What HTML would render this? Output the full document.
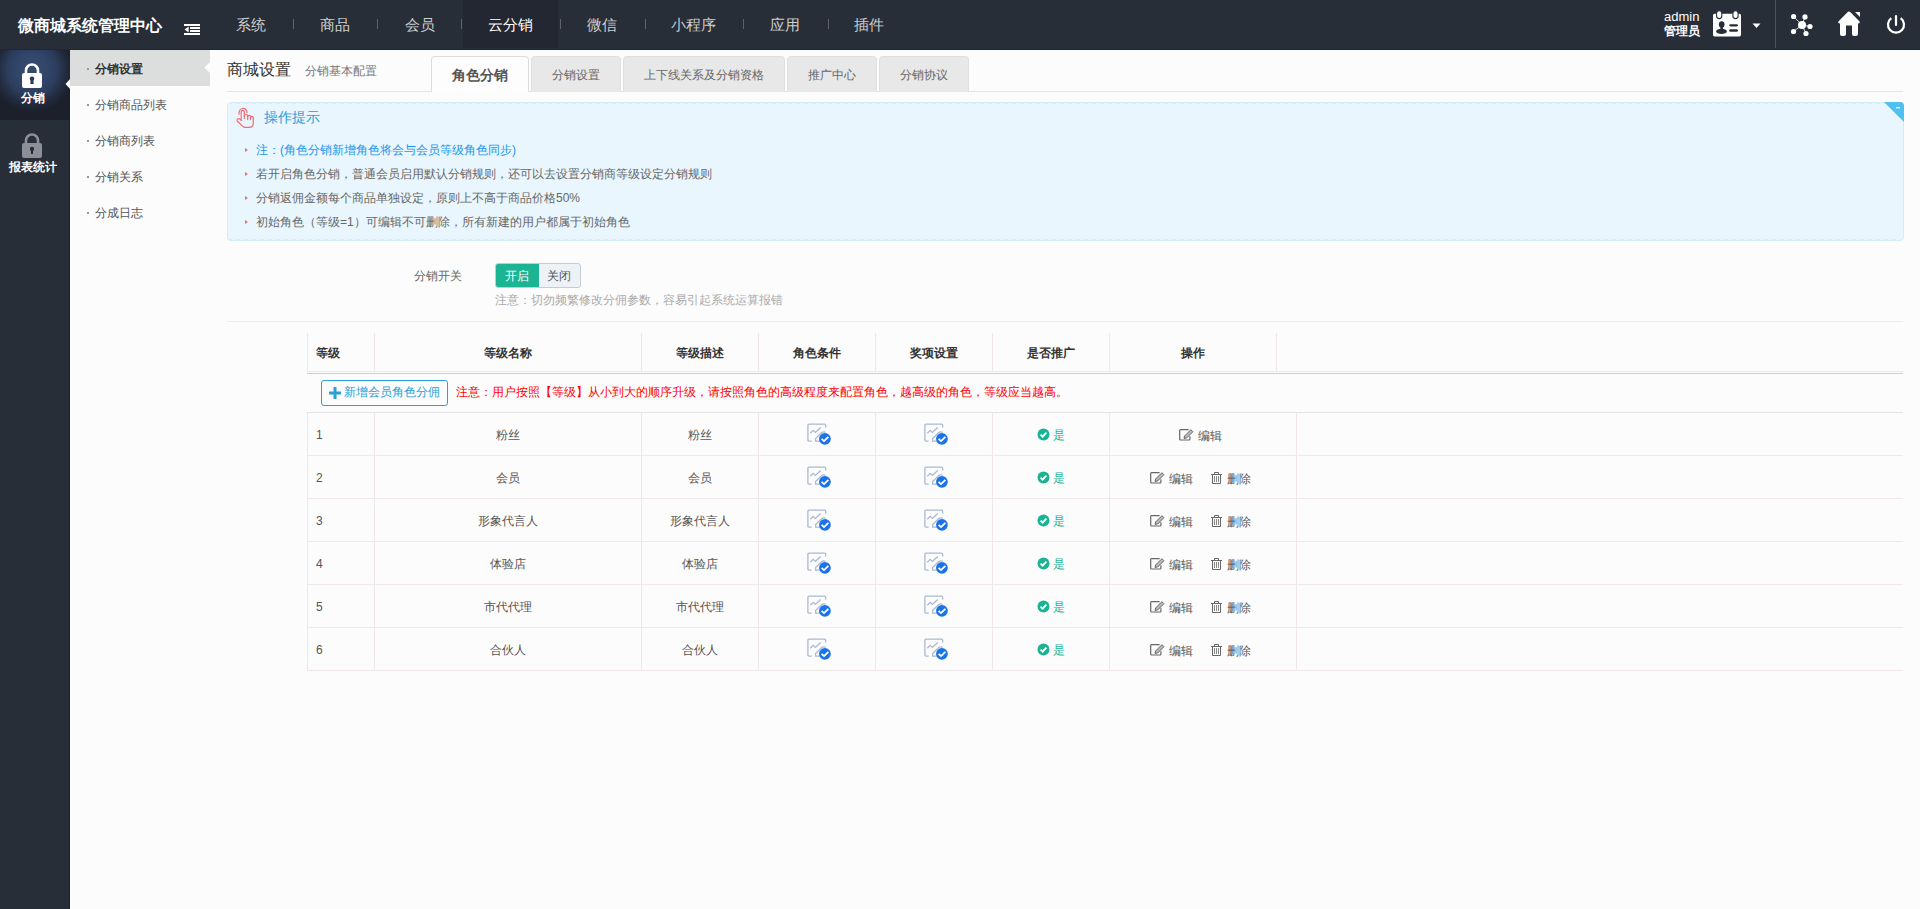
<!DOCTYPE html>
<html><head><meta charset="utf-8">
<style>
*{margin:0;padding:0;box-sizing:border-box}
html,body{width:1920px;height:909px;overflow:hidden;background:#fcfcfc;font-family:"Liberation Sans",sans-serif;font-size:12px;color:#555}
.abs{position:absolute;white-space:nowrap}
#hdr{position:absolute;left:0;top:0;width:1920px;height:50px;background:#282e38;border-bottom:1px solid #222830}
#logo{left:18px;top:16px;font-size:16px;font-weight:bold;color:#fff}
.nav{top:16px;font-size:15px;color:#cfcfcf}
.sep{top:19px;width:1px;height:10px;background:#5d626b}
#side{position:absolute;left:0;top:50px;width:70px;height:859px;background:#282e38;border-right:1px solid #1d222b}
#sub{position:absolute;left:70px;top:50px;width:140px;height:859px;background:#fcfcfc}

.sm{left:87px;font-size:12px;color:#555}
.sm i{display:inline-block;width:2px;height:2px;background:#999;margin-right:6px;vertical-align:top;position:relative;top:7px}
.tab{top:56px;height:36px;background:#e8e8e8;border-radius:4px 4px 0 0;text-align:center;line-height:37px;font-size:12px;color:#666;border:1px solid #e0e0e0;border-bottom:none}
.tab.act{background:#fdfdfd;border-color:#ddd;font-size:14px;font-weight:bold;color:#555;height:36px;z-index:2}
.tip{left:245px;font-size:12px;color:#666}
.tip b{display:inline-block;width:0;height:0;border-left:3px solid #f46a6a;border-top:2.5px solid transparent;border-bottom:2.5px solid transparent;margin-right:8px;vertical-align:middle;position:relative;top:-1px}
.th{font-size:12px;font-weight:bold;color:#333}
.td{font-size:12px;color:#555}
.tipbox{background:#e9f6fd;border:1px solid #d2ecf8;border-radius:4px;overflow:hidden}
.tipbox:before{content:"";position:absolute;left:0;top:0;right:0;height:1px;background:repeating-linear-gradient(90deg,#d6eef9 0 4px,transparent 4px 8px)}
.tipbox:after{content:"";position:absolute;left:0;bottom:0;right:0;height:1px;background:repeating-linear-gradient(90deg,#d6eef9 0 4px,transparent 4px 8px)}
</style></head><body>
<div id="hdr"></div>
<div class="abs" id="logo">微商城系统管理中心</div>
<div class="abs nav" style="left:236px">系统</div>
<div class="abs sep" style="left:293px"></div>
<div class="abs nav" style="left:320px">商品</div>
<div class="abs sep" style="left:377px"></div>
<div class="abs nav" style="left:405px">会员</div>
<div class="abs sep" style="left:461px"></div>
<div class="abs" style="left:463px;top:0;width:95px;height:48px;background:#222731"></div>
<div class="abs nav" style="left:488px;color:#fff">云分销</div>
<div class="abs sep" style="left:560px"></div>
<div class="abs nav" style="left:587px">微信</div>
<div class="abs sep" style="left:645px"></div>
<div class="abs nav" style="left:671px">小程序</div>
<div class="abs sep" style="left:743px"></div>
<div class="abs nav" style="left:770px">应用</div>
<div class="abs sep" style="left:828px"></div>
<div class="abs nav" style="left:854px">插件</div>

<div id="side"></div>
<div id="sub"></div>


<!-- header right -->
<div class="abs" style="left:1664px;top:10px;font-size:13px;color:#fff;line-height:14px">admin</div>
<div class="abs" style="left:1664px;top:24px;font-size:12px;font-weight:bold;color:#fff;line-height:14px">管理员</div>
<svg class="abs" style="left:1712px;top:10px" width="30" height="28" viewBox="0 0 30 28">
 <rect x="1" y="3.8" width="28" height="22.6" rx="1.6" fill="#fff"/>
 <rect x="4.6" y="0.6" width="5.2" height="8" rx="2.6" fill="#fff" stroke="#282e38" stroke-width="1.1"/>
 <rect x="20.9" y="0.6" width="5.2" height="8" rx="2.6" fill="#fff" stroke="#282e38" stroke-width="1.1"/>
 <ellipse cx="9.7" cy="14.5" rx="2.8" ry="3.3" fill="#282e38"/>
 <rect x="8.4" y="16" width="2.6" height="4" fill="#282e38"/>
 <ellipse cx="9.5" cy="21.4" rx="5.3" ry="2.6" fill="#282e38"/>
 <rect x="17.2" y="14.2" width="8.8" height="2.3" rx="1.15" fill="#282e38"/>
 <rect x="17.2" y="19.3" width="8.8" height="2.4" rx="1.2" fill="#282e38"/>
</svg>
<svg class="abs" style="left:1752px;top:23px" width="10" height="6"><path d="M0.5 0.5 L8.5 0.5 L4.5 5 Z" fill="#fff"/></svg>
<div class="abs" style="left:1775px;top:0;width:1px;height:48px;background:#4c515a"></div>
<svg class="abs" style="left:1789px;top:12px" width="26" height="26" viewBox="0 0 26 26">
 <g stroke="#fff" stroke-width="0.8"><line x1="4.6" y1="4.5" x2="13" y2="13"/><line x1="16" y1="4.9" x2="13" y2="13"/><line x1="21" y1="14.5" x2="13" y2="13"/><line x1="4.5" y1="19.5" x2="13" y2="13"/><line x1="17" y1="21.5" x2="13" y2="13"/></g>
 <circle cx="13" cy="13" r="4" fill="#fff"/>
 <circle cx="4.6" cy="4.5" r="2.6" fill="#fff"/><circle cx="16" cy="4.9" r="2.6" fill="#fff"/><circle cx="21" cy="14.5" r="2.6" fill="#fff"/><circle cx="4.5" cy="19.5" r="2.6" fill="#fff"/><circle cx="17" cy="21.5" r="2.6" fill="#fff"/>
</svg>
<svg class="abs" style="left:1837px;top:11px" width="25" height="26" viewBox="0 0 25 26">
 <path d="M10.5 1.2 Q12 0 13.5 1.2 L22.6 10.6 Q23.6 12.2 21.5 12.6 L21 12.6 L21 23 Q21 25 19 25 L17 25 Q15 25 15 23 L15 14.5 L9 14.5 L9 23 Q9 25 7 25 L5 25 Q3 25 3 23 L3 12.6 L2.5 12.6 Q0.4 12.2 1.4 10.6 Z" fill="#fff"/>
 <path d="M18 1 L23 1 L23 6 Z" fill="#fff"/>
</svg>
<svg class="abs" style="left:1886px;top:14px" width="20" height="21" viewBox="0 0 20 21">
 <path d="M5.3 4.2 A8 8 0 1 0 14.7 4.2" fill="none" stroke="#fff" stroke-width="2.2"/>
 <line x1="10" y1="2" x2="10" y2="11" stroke="#fff" stroke-width="2.2" stroke-linecap="round"/>
</svg>
<!-- menu toggle -->
<svg class="abs" style="left:184px;top:24px" width="16" height="11" viewBox="0 0 16 11">
 <rect x="0" y="0" width="16" height="2" fill="#fff"/><rect x="6" y="3" width="10" height="2" fill="#fff"/><rect x="6" y="6" width="10" height="2" fill="#fff"/><rect x="0" y="9" width="16" height="2" fill="#fff"/><path d="M0.6 5.5 L4.6 2.6 L4.6 8.4Z" fill="#fff"/>
</svg>

<!-- sidebar -->
<div class="abs" style="left:0;top:50px;width:70px;height:70px;background:radial-gradient(circle at 32px 20px,#364b6d 0,#32466a 16px,#2c3d5d 25px,#232d42 33px,#1b202b 42px)"></div>
<svg class="abs" style="left:21px;top:63px" width="22" height="26" viewBox="0 0 22 26">
 <path d="M5 11 L5 7.5 A6 6 0 0 1 17 7.5 L17 11" fill="none" stroke="#fff" stroke-width="2.6"/>
 <rect x="1" y="10" width="20" height="15" rx="2" fill="#fff"/>
 <circle cx="11" cy="15.8" r="2.3" fill="#2a3a57"/><path d="M9.8 16 L12.2 16 L12.7 21 L9.3 21Z" fill="#2a3a57"/>
</svg>
<div class="abs" style="left:21px;top:90px;font-size:12px;font-weight:bold;color:#fff">分销</div>
<svg class="abs" style="left:65px;top:78px" width="6" height="12"><path d="M6 0 L0.5 6 L6 12Z" fill="#fdfdfd"/></svg>
<svg class="abs" style="left:21px;top:133px" width="22" height="26" viewBox="0 0 22 26">
 <path d="M5 11 L5 7.5 A6 6 0 0 1 17 7.5 L17 11" fill="none" stroke="#8c8f95" stroke-width="2.6"/>
 <rect x="1" y="10" width="20" height="15" rx="2" fill="#8c8f95"/>
 <circle cx="11" cy="16" r="2.2" fill="#282e38"/><rect x="10" y="16" width="2" height="5" fill="#282e38"/>
</svg>
<div class="abs" style="left:9px;top:159px;font-size:12px;font-weight:bold;color:#fff">报表统计</div>

<!-- submenu -->
<div class="abs" style="left:70px;top:50px;width:140px;height:36px;background:#dcdddd"></div>
<svg class="abs" style="left:204px;top:62px" width="6" height="11"><path d="M6 0 L0.5 5.5 L6 11Z" fill="#fdfdfd"/></svg>
<div class="abs sm" style="top:61px;font-weight:bold;color:#333"><i></i>分销设置</div>
<div class="abs sm" style="top:97px"><i></i>分销商品列表</div>
<div class="abs sm" style="top:133px"><i></i>分销商列表</div>
<div class="abs sm" style="top:169px"><i></i>分销关系</div>
<div class="abs sm" style="top:205px"><i></i>分成日志</div>

<!-- title + tabs -->
<div class="abs" style="left:227px;top:60px;font-size:16px;color:#333">商城设置</div>
<div class="abs" style="left:305px;top:63px;font-size:12px;color:#777">分销基本配置</div>
<div class="abs" style="left:227px;top:91px;width:1676px;height:1px;background:#e3e3e3"></div>
<div class="abs tab act" style="left:431px;width:98px">角色分销</div>
<div class="abs tab" style="left:531px;width:90px">分销设置</div>
<div class="abs tab" style="left:623px;width:162px">上下线关系及分销资格</div>
<div class="abs tab" style="left:787px;width:90px">推广中心</div>
<div class="abs tab" style="left:879px;width:90px">分销协议</div>

<!-- tips -->
<div class="abs tipbox" style="left:227px;top:102px;width:1677px;height:139px"></div>
<svg class="abs" style="left:1884px;top:102px" width="20" height="20"><path d="M0 0 L16 0 Q20 0 20 4 L20 20Z" fill="#4fc0ef"/><rect x="12" y="5" width="4" height="1.3" fill="#fff"/></svg>
<svg class="abs" style="left:232px;top:104px" width="26" height="28" viewBox="0 0 26 28">
 <g fill="none" stroke="#f66a70" stroke-width="1.2" stroke-linecap="round" stroke-linejoin="round">
 <path d="M7 10.2 C6.4 3.4 14.8 2.4 15 8.4"/>
 <path d="M9.2 16.3 L9.2 7.8 Q9.2 6.3 10.7 6.3 Q12.3 6.3 12.3 7.8 L12.3 14.6"/>
 <path d="M12.3 12 Q12.3 10.5 14 10.5 Q15.7 10.5 15.7 12 L15.7 15.6"/>
 <path d="M15.7 12.8 Q15.7 11.4 17.1 11.4 Q18.5 11.4 18.5 12.8 L18.5 15.6"/>
 <path d="M18.5 13.6 Q18.5 12.3 19.9 12.3 Q21.3 12.3 21.3 13.6 L21.3 19 Q21.3 23.4 17 23.4 L13.3 23.4 Q11.8 23.4 10.8 22.4 L5.4 17.2 Q4.5 16.2 5.4 15.2 Q6.6 14.2 7.8 15.1 L9.2 16.3"/>
 </g>
</svg>
<div class="abs" style="left:264px;top:109px;font-size:14px;color:#2a9bd8">操作提示</div>
<div class="abs tip" style="top:142px;color:#1c97ee"><b></b>注：(角色分销新增角色将会与会员等级角色同步)</div>
<div class="abs tip" style="top:166px"><b></b>若开启角色分销，普通会员启用默认分销规则，还可以去设置分销商等级设定分销规则</div>
<div class="abs tip" style="top:190px"><b></b>分销返佣金额每个商品单独设定，原则上不高于商品价格50%</div>
<div class="abs tip" style="top:214px"><b></b>初始角色（等级=1）可编辑不可删除，所有新建的用户都属于初始角色</div>

<!-- switch -->
<div class="abs" style="left:414px;top:268px;font-size:12px;color:#666">分销开关</div>
<div class="abs" style="left:495px;top:263px;width:86px;height:25px;border:1px solid #c8ccd0;border-radius:3px;background:#edf2f6;overflow:hidden">
 <div style="position:absolute;left:-1px;top:-1px;width:44px;height:25px;background:#1bb594;border-radius:3px 0 0 3px"></div>
 <div style="position:absolute;left:9px;top:4px;color:#fff;font-size:12px">开启</div>
 <div style="position:absolute;left:51px;top:4px;color:#555;font-size:12px">关闭</div>
</div>
<div class="abs" style="left:495px;top:292px;font-size:12px;color:#aaa">注意：切勿频繁修改分佣参数，容易引起系统运算报错</div>
<div class="abs" style="left:227px;top:321px;width:1676px;height:1px;background:#e6f1f8"></div>

<!-- table -->
<div class="abs" style="left:307px;top:333px;width:1px;height:38px;background:#f0e8e8"></div>
<div class="abs" style="left:374px;top:333px;width:1px;height:38px;background:#f0e8e8"></div>
<div class="abs" style="left:641px;top:333px;width:1px;height:38px;background:#f0e8e8"></div>
<div class="abs" style="left:758px;top:333px;width:1px;height:38px;background:#f0e8e8"></div>
<div class="abs" style="left:875px;top:333px;width:1px;height:38px;background:#f0e8e8"></div>
<div class="abs" style="left:992px;top:333px;width:1px;height:38px;background:#f0e8e8"></div>
<div class="abs" style="left:1109px;top:333px;width:1px;height:38px;background:#f0e8e8"></div>
<div class="abs" style="left:1276px;top:333px;width:1px;height:38px;background:#f0e8e8"></div>
<div class="abs" style="left:307px;top:371px;width:1596px;height:1px;background:#f0e8e8"></div>
<div class="abs" style="left:307px;top:373px;width:1596px;height:1px;background:#cfcfcf"></div>
<div class="abs th" style="left:316px;top:345px">等级</div>
<div class="abs th" style="left:374px;width:267px;top:345px;text-align:center">等级名称</div>
<div class="abs th" style="left:641px;width:117px;top:345px;text-align:center">等级描述</div>
<div class="abs th" style="left:758px;width:117px;top:345px;text-align:center">角色条件</div>
<div class="abs th" style="left:875px;width:117px;top:345px;text-align:center">奖项设置</div>
<div class="abs th" style="left:992px;width:117px;top:345px;text-align:center">是否推广</div>
<div class="abs th" style="left:1109px;width:167px;top:345px;text-align:center">操作</div>
<div class="abs" style="left:321px;top:380px;width:127px;height:26px;border:1px solid #2aa0d8;border-radius:3px"></div>
<svg class="abs" style="left:329px;top:387px" width="12" height="12"><rect x="4.5" y="0" width="3" height="12" fill="#2aa0d8"/><rect x="0" y="4.5" width="12" height="3" fill="#2aa0d8"/></svg>
<div class="abs" style="left:344px;top:384px;color:#2aa0d8;font-size:12px">新增会员角色分佣</div>
<div class="abs" style="left:456px;top:384px;color:#f00;font-size:12px">注意：用户按照【等级】从小到大的顺序升级，请按照角色的高级程度来配置角色，越高级的角色，等级应当越高。</div>
<div class="abs" style="left:307px;top:412px;width:1596px;height:1px;background:#e2e2e2"></div>
<div class="abs" style="left:307px;top:413px;width:1px;height:42px;background:#f0e8e8"></div>
<div class="abs" style="left:374px;top:413px;width:1px;height:42px;background:#f0e8e8"></div>
<div class="abs" style="left:641px;top:413px;width:1px;height:42px;background:#f0e8e8"></div>
<div class="abs" style="left:758px;top:413px;width:1px;height:42px;background:#f0e8e8"></div>
<div class="abs" style="left:875px;top:413px;width:1px;height:42px;background:#f0e8e8"></div>
<div class="abs" style="left:992px;top:413px;width:1px;height:42px;background:#f0e8e8"></div>
<div class="abs" style="left:1109px;top:413px;width:1px;height:42px;background:#f0e8e8"></div>
<div class="abs" style="left:1296px;top:413px;width:1px;height:42px;background:#f0e8e8"></div>
<div class="abs" style="left:307px;top:455px;width:1596px;height:1px;background:#f0e8e8"></div>
<div class="abs td" style="left:316px;top:428px">1</div>
<div class="abs td" style="left:374px;width:267px;top:427px;text-align:center">粉丝</div>
<div class="abs td" style="left:641px;width:117px;top:427px;text-align:center">粉丝</div>
<svg class="abs" style="left:807px;top:423px" width="26" height="24" viewBox="0 0 26 24"><g fill="none" stroke="#a9b9cf" stroke-width="1.3"><path d="M4.7 18.2 L2.1 18.2 Q0.9 18.2 0.9 17 L0.9 2.4 Q0.9 1.2 2.1 1.2 L17.5 1.2 Q18.7 1.2 18.7 2.4 L18.7 4.6"/><path d="M3.3 10.2 L6.2 7.3 L8.4 9.4 L13.7 4.5"/><path d="M13 18.2 L8.6 18.2 L8.6 15.6 L14.8 9.6 Q16.6 8.4 18.6 9.4"/></g><circle cx="17.9" cy="15.8" r="5.9" fill="#1a73e8"/><path d="M14.6 15.9 L17 18.1 L21.4 13.8" fill="none" stroke="#fff" stroke-width="1.8"/></svg>
<svg class="abs" style="left:924px;top:423px" width="26" height="24" viewBox="0 0 26 24"><g fill="none" stroke="#a9b9cf" stroke-width="1.3"><path d="M4.7 18.2 L2.1 18.2 Q0.9 18.2 0.9 17 L0.9 2.4 Q0.9 1.2 2.1 1.2 L17.5 1.2 Q18.7 1.2 18.7 2.4 L18.7 4.6"/><path d="M3.3 10.2 L6.2 7.3 L8.4 9.4 L13.7 4.5"/><path d="M13 18.2 L8.6 18.2 L8.6 15.6 L14.8 9.6 Q16.6 8.4 18.6 9.4"/></g><circle cx="17.9" cy="15.8" r="5.9" fill="#1a73e8"/><path d="M14.6 15.9 L17 18.1 L21.4 13.8" fill="none" stroke="#fff" stroke-width="1.8"/></svg>
<svg class="abs" style="left:1037px;top:428px" width="13" height="13" viewBox="0 0 13 13"><circle cx="6.5" cy="6.5" r="6" fill="#1ab394"/><path d="M3.6 6.6 L5.6 8.6 L9.4 4.6" fill="none" stroke="#fff" stroke-width="1.8"/></svg>
<div class="abs td" style="left:1053px;top:427px;color:#1ab394">是</div>
<svg class="abs" style="left:1179px;top:429px" width="15" height="12" viewBox="0 0 15 12"><path d="M9.6 0.7 L1.5 0.7 Q0.7 0.7 0.7 1.5 L0.7 10.2 Q0.7 11 1.5 11 L10.1 11 Q10.9 11 10.9 10.2 L10.9 7.2" fill="none" stroke="#666" stroke-width="1.2"/><path d="M5 9.4 L5.6 7 L11.9 0.7 L13.9 2.7 L7.6 9 Z" fill="#bbb" stroke="#666" stroke-width="1"/></svg>
<div class="abs td" style="left:1198px;top:428px">编辑</div>
<div class="abs" style="left:307px;top:456px;width:1px;height:42px;background:#f0e8e8"></div>
<div class="abs" style="left:374px;top:456px;width:1px;height:42px;background:#f0e8e8"></div>
<div class="abs" style="left:641px;top:456px;width:1px;height:42px;background:#f0e8e8"></div>
<div class="abs" style="left:758px;top:456px;width:1px;height:42px;background:#f0e8e8"></div>
<div class="abs" style="left:875px;top:456px;width:1px;height:42px;background:#f0e8e8"></div>
<div class="abs" style="left:992px;top:456px;width:1px;height:42px;background:#f0e8e8"></div>
<div class="abs" style="left:1109px;top:456px;width:1px;height:42px;background:#f0e8e8"></div>
<div class="abs" style="left:1296px;top:456px;width:1px;height:42px;background:#f0e8e8"></div>
<div class="abs" style="left:307px;top:498px;width:1596px;height:1px;background:#f0e8e8"></div>
<div class="abs td" style="left:316px;top:471px">2</div>
<div class="abs td" style="left:374px;width:267px;top:470px;text-align:center">会员</div>
<div class="abs td" style="left:641px;width:117px;top:470px;text-align:center">会员</div>
<svg class="abs" style="left:807px;top:466px" width="26" height="24" viewBox="0 0 26 24"><g fill="none" stroke="#a9b9cf" stroke-width="1.3"><path d="M4.7 18.2 L2.1 18.2 Q0.9 18.2 0.9 17 L0.9 2.4 Q0.9 1.2 2.1 1.2 L17.5 1.2 Q18.7 1.2 18.7 2.4 L18.7 4.6"/><path d="M3.3 10.2 L6.2 7.3 L8.4 9.4 L13.7 4.5"/><path d="M13 18.2 L8.6 18.2 L8.6 15.6 L14.8 9.6 Q16.6 8.4 18.6 9.4"/></g><circle cx="17.9" cy="15.8" r="5.9" fill="#1a73e8"/><path d="M14.6 15.9 L17 18.1 L21.4 13.8" fill="none" stroke="#fff" stroke-width="1.8"/></svg>
<svg class="abs" style="left:924px;top:466px" width="26" height="24" viewBox="0 0 26 24"><g fill="none" stroke="#a9b9cf" stroke-width="1.3"><path d="M4.7 18.2 L2.1 18.2 Q0.9 18.2 0.9 17 L0.9 2.4 Q0.9 1.2 2.1 1.2 L17.5 1.2 Q18.7 1.2 18.7 2.4 L18.7 4.6"/><path d="M3.3 10.2 L6.2 7.3 L8.4 9.4 L13.7 4.5"/><path d="M13 18.2 L8.6 18.2 L8.6 15.6 L14.8 9.6 Q16.6 8.4 18.6 9.4"/></g><circle cx="17.9" cy="15.8" r="5.9" fill="#1a73e8"/><path d="M14.6 15.9 L17 18.1 L21.4 13.8" fill="none" stroke="#fff" stroke-width="1.8"/></svg>
<svg class="abs" style="left:1037px;top:471px" width="13" height="13" viewBox="0 0 13 13"><circle cx="6.5" cy="6.5" r="6" fill="#1ab394"/><path d="M3.6 6.6 L5.6 8.6 L9.4 4.6" fill="none" stroke="#fff" stroke-width="1.8"/></svg>
<div class="abs td" style="left:1053px;top:470px;color:#1ab394">是</div>
<svg class="abs" style="left:1150px;top:472px" width="15" height="12" viewBox="0 0 15 12"><path d="M9.6 0.7 L1.5 0.7 Q0.7 0.7 0.7 1.5 L0.7 10.2 Q0.7 11 1.5 11 L10.1 11 Q10.9 11 10.9 10.2 L10.9 7.2" fill="none" stroke="#666" stroke-width="1.2"/><path d="M5 9.4 L5.6 7 L11.9 0.7 L13.9 2.7 L7.6 9 Z" fill="#bbb" stroke="#666" stroke-width="1"/></svg>
<div class="abs td" style="left:1169px;top:471px">编辑</div>
<svg class="abs" style="left:1211px;top:472px" width="12" height="12" viewBox="0 0 12 12"><path d="M0 2.5 L11 2.5 M3.5 2.5 L3.5 0.5 L7.5 0.5 L7.5 2.5" fill="none" stroke="#666" stroke-width="1"/><path d="M1.5 2.5 L1.5 11.5 L9.5 11.5 L9.5 2.5" fill="none" stroke="#666" stroke-width="1"/><path d="M3.5 4 V10 M5.5 4 V10 M7.5 4 V10" stroke="#888" stroke-width="1"/></svg>
<div class="abs td" style="left:1227px;top:471px">删除</div>
<div class="abs" style="left:307px;top:499px;width:1px;height:42px;background:#f0e8e8"></div>
<div class="abs" style="left:374px;top:499px;width:1px;height:42px;background:#f0e8e8"></div>
<div class="abs" style="left:641px;top:499px;width:1px;height:42px;background:#f0e8e8"></div>
<div class="abs" style="left:758px;top:499px;width:1px;height:42px;background:#f0e8e8"></div>
<div class="abs" style="left:875px;top:499px;width:1px;height:42px;background:#f0e8e8"></div>
<div class="abs" style="left:992px;top:499px;width:1px;height:42px;background:#f0e8e8"></div>
<div class="abs" style="left:1109px;top:499px;width:1px;height:42px;background:#f0e8e8"></div>
<div class="abs" style="left:1296px;top:499px;width:1px;height:42px;background:#f0e8e8"></div>
<div class="abs" style="left:307px;top:541px;width:1596px;height:1px;background:#f0e8e8"></div>
<div class="abs td" style="left:316px;top:514px">3</div>
<div class="abs td" style="left:374px;width:267px;top:513px;text-align:center">形象代言人</div>
<div class="abs td" style="left:641px;width:117px;top:513px;text-align:center">形象代言人</div>
<svg class="abs" style="left:807px;top:509px" width="26" height="24" viewBox="0 0 26 24"><g fill="none" stroke="#a9b9cf" stroke-width="1.3"><path d="M4.7 18.2 L2.1 18.2 Q0.9 18.2 0.9 17 L0.9 2.4 Q0.9 1.2 2.1 1.2 L17.5 1.2 Q18.7 1.2 18.7 2.4 L18.7 4.6"/><path d="M3.3 10.2 L6.2 7.3 L8.4 9.4 L13.7 4.5"/><path d="M13 18.2 L8.6 18.2 L8.6 15.6 L14.8 9.6 Q16.6 8.4 18.6 9.4"/></g><circle cx="17.9" cy="15.8" r="5.9" fill="#1a73e8"/><path d="M14.6 15.9 L17 18.1 L21.4 13.8" fill="none" stroke="#fff" stroke-width="1.8"/></svg>
<svg class="abs" style="left:924px;top:509px" width="26" height="24" viewBox="0 0 26 24"><g fill="none" stroke="#a9b9cf" stroke-width="1.3"><path d="M4.7 18.2 L2.1 18.2 Q0.9 18.2 0.9 17 L0.9 2.4 Q0.9 1.2 2.1 1.2 L17.5 1.2 Q18.7 1.2 18.7 2.4 L18.7 4.6"/><path d="M3.3 10.2 L6.2 7.3 L8.4 9.4 L13.7 4.5"/><path d="M13 18.2 L8.6 18.2 L8.6 15.6 L14.8 9.6 Q16.6 8.4 18.6 9.4"/></g><circle cx="17.9" cy="15.8" r="5.9" fill="#1a73e8"/><path d="M14.6 15.9 L17 18.1 L21.4 13.8" fill="none" stroke="#fff" stroke-width="1.8"/></svg>
<svg class="abs" style="left:1037px;top:514px" width="13" height="13" viewBox="0 0 13 13"><circle cx="6.5" cy="6.5" r="6" fill="#1ab394"/><path d="M3.6 6.6 L5.6 8.6 L9.4 4.6" fill="none" stroke="#fff" stroke-width="1.8"/></svg>
<div class="abs td" style="left:1053px;top:513px;color:#1ab394">是</div>
<svg class="abs" style="left:1150px;top:515px" width="15" height="12" viewBox="0 0 15 12"><path d="M9.6 0.7 L1.5 0.7 Q0.7 0.7 0.7 1.5 L0.7 10.2 Q0.7 11 1.5 11 L10.1 11 Q10.9 11 10.9 10.2 L10.9 7.2" fill="none" stroke="#666" stroke-width="1.2"/><path d="M5 9.4 L5.6 7 L11.9 0.7 L13.9 2.7 L7.6 9 Z" fill="#bbb" stroke="#666" stroke-width="1"/></svg>
<div class="abs td" style="left:1169px;top:514px">编辑</div>
<svg class="abs" style="left:1211px;top:515px" width="12" height="12" viewBox="0 0 12 12"><path d="M0 2.5 L11 2.5 M3.5 2.5 L3.5 0.5 L7.5 0.5 L7.5 2.5" fill="none" stroke="#666" stroke-width="1"/><path d="M1.5 2.5 L1.5 11.5 L9.5 11.5 L9.5 2.5" fill="none" stroke="#666" stroke-width="1"/><path d="M3.5 4 V10 M5.5 4 V10 M7.5 4 V10" stroke="#888" stroke-width="1"/></svg>
<div class="abs td" style="left:1227px;top:514px">删除</div>
<div class="abs" style="left:307px;top:542px;width:1px;height:42px;background:#f0e8e8"></div>
<div class="abs" style="left:374px;top:542px;width:1px;height:42px;background:#f0e8e8"></div>
<div class="abs" style="left:641px;top:542px;width:1px;height:42px;background:#f0e8e8"></div>
<div class="abs" style="left:758px;top:542px;width:1px;height:42px;background:#f0e8e8"></div>
<div class="abs" style="left:875px;top:542px;width:1px;height:42px;background:#f0e8e8"></div>
<div class="abs" style="left:992px;top:542px;width:1px;height:42px;background:#f0e8e8"></div>
<div class="abs" style="left:1109px;top:542px;width:1px;height:42px;background:#f0e8e8"></div>
<div class="abs" style="left:1296px;top:542px;width:1px;height:42px;background:#f0e8e8"></div>
<div class="abs" style="left:307px;top:584px;width:1596px;height:1px;background:#f0e8e8"></div>
<div class="abs td" style="left:316px;top:557px">4</div>
<div class="abs td" style="left:374px;width:267px;top:556px;text-align:center">体验店</div>
<div class="abs td" style="left:641px;width:117px;top:556px;text-align:center">体验店</div>
<svg class="abs" style="left:807px;top:552px" width="26" height="24" viewBox="0 0 26 24"><g fill="none" stroke="#a9b9cf" stroke-width="1.3"><path d="M4.7 18.2 L2.1 18.2 Q0.9 18.2 0.9 17 L0.9 2.4 Q0.9 1.2 2.1 1.2 L17.5 1.2 Q18.7 1.2 18.7 2.4 L18.7 4.6"/><path d="M3.3 10.2 L6.2 7.3 L8.4 9.4 L13.7 4.5"/><path d="M13 18.2 L8.6 18.2 L8.6 15.6 L14.8 9.6 Q16.6 8.4 18.6 9.4"/></g><circle cx="17.9" cy="15.8" r="5.9" fill="#1a73e8"/><path d="M14.6 15.9 L17 18.1 L21.4 13.8" fill="none" stroke="#fff" stroke-width="1.8"/></svg>
<svg class="abs" style="left:924px;top:552px" width="26" height="24" viewBox="0 0 26 24"><g fill="none" stroke="#a9b9cf" stroke-width="1.3"><path d="M4.7 18.2 L2.1 18.2 Q0.9 18.2 0.9 17 L0.9 2.4 Q0.9 1.2 2.1 1.2 L17.5 1.2 Q18.7 1.2 18.7 2.4 L18.7 4.6"/><path d="M3.3 10.2 L6.2 7.3 L8.4 9.4 L13.7 4.5"/><path d="M13 18.2 L8.6 18.2 L8.6 15.6 L14.8 9.6 Q16.6 8.4 18.6 9.4"/></g><circle cx="17.9" cy="15.8" r="5.9" fill="#1a73e8"/><path d="M14.6 15.9 L17 18.1 L21.4 13.8" fill="none" stroke="#fff" stroke-width="1.8"/></svg>
<svg class="abs" style="left:1037px;top:557px" width="13" height="13" viewBox="0 0 13 13"><circle cx="6.5" cy="6.5" r="6" fill="#1ab394"/><path d="M3.6 6.6 L5.6 8.6 L9.4 4.6" fill="none" stroke="#fff" stroke-width="1.8"/></svg>
<div class="abs td" style="left:1053px;top:556px;color:#1ab394">是</div>
<svg class="abs" style="left:1150px;top:558px" width="15" height="12" viewBox="0 0 15 12"><path d="M9.6 0.7 L1.5 0.7 Q0.7 0.7 0.7 1.5 L0.7 10.2 Q0.7 11 1.5 11 L10.1 11 Q10.9 11 10.9 10.2 L10.9 7.2" fill="none" stroke="#666" stroke-width="1.2"/><path d="M5 9.4 L5.6 7 L11.9 0.7 L13.9 2.7 L7.6 9 Z" fill="#bbb" stroke="#666" stroke-width="1"/></svg>
<div class="abs td" style="left:1169px;top:557px">编辑</div>
<svg class="abs" style="left:1211px;top:558px" width="12" height="12" viewBox="0 0 12 12"><path d="M0 2.5 L11 2.5 M3.5 2.5 L3.5 0.5 L7.5 0.5 L7.5 2.5" fill="none" stroke="#666" stroke-width="1"/><path d="M1.5 2.5 L1.5 11.5 L9.5 11.5 L9.5 2.5" fill="none" stroke="#666" stroke-width="1"/><path d="M3.5 4 V10 M5.5 4 V10 M7.5 4 V10" stroke="#888" stroke-width="1"/></svg>
<div class="abs td" style="left:1227px;top:557px">删除</div>
<div class="abs" style="left:307px;top:585px;width:1px;height:42px;background:#f0e8e8"></div>
<div class="abs" style="left:374px;top:585px;width:1px;height:42px;background:#f0e8e8"></div>
<div class="abs" style="left:641px;top:585px;width:1px;height:42px;background:#f0e8e8"></div>
<div class="abs" style="left:758px;top:585px;width:1px;height:42px;background:#f0e8e8"></div>
<div class="abs" style="left:875px;top:585px;width:1px;height:42px;background:#f0e8e8"></div>
<div class="abs" style="left:992px;top:585px;width:1px;height:42px;background:#f0e8e8"></div>
<div class="abs" style="left:1109px;top:585px;width:1px;height:42px;background:#f0e8e8"></div>
<div class="abs" style="left:1296px;top:585px;width:1px;height:42px;background:#f0e8e8"></div>
<div class="abs" style="left:307px;top:627px;width:1596px;height:1px;background:#f0e8e8"></div>
<div class="abs td" style="left:316px;top:600px">5</div>
<div class="abs td" style="left:374px;width:267px;top:599px;text-align:center">市代代理</div>
<div class="abs td" style="left:641px;width:117px;top:599px;text-align:center">市代代理</div>
<svg class="abs" style="left:807px;top:595px" width="26" height="24" viewBox="0 0 26 24"><g fill="none" stroke="#a9b9cf" stroke-width="1.3"><path d="M4.7 18.2 L2.1 18.2 Q0.9 18.2 0.9 17 L0.9 2.4 Q0.9 1.2 2.1 1.2 L17.5 1.2 Q18.7 1.2 18.7 2.4 L18.7 4.6"/><path d="M3.3 10.2 L6.2 7.3 L8.4 9.4 L13.7 4.5"/><path d="M13 18.2 L8.6 18.2 L8.6 15.6 L14.8 9.6 Q16.6 8.4 18.6 9.4"/></g><circle cx="17.9" cy="15.8" r="5.9" fill="#1a73e8"/><path d="M14.6 15.9 L17 18.1 L21.4 13.8" fill="none" stroke="#fff" stroke-width="1.8"/></svg>
<svg class="abs" style="left:924px;top:595px" width="26" height="24" viewBox="0 0 26 24"><g fill="none" stroke="#a9b9cf" stroke-width="1.3"><path d="M4.7 18.2 L2.1 18.2 Q0.9 18.2 0.9 17 L0.9 2.4 Q0.9 1.2 2.1 1.2 L17.5 1.2 Q18.7 1.2 18.7 2.4 L18.7 4.6"/><path d="M3.3 10.2 L6.2 7.3 L8.4 9.4 L13.7 4.5"/><path d="M13 18.2 L8.6 18.2 L8.6 15.6 L14.8 9.6 Q16.6 8.4 18.6 9.4"/></g><circle cx="17.9" cy="15.8" r="5.9" fill="#1a73e8"/><path d="M14.6 15.9 L17 18.1 L21.4 13.8" fill="none" stroke="#fff" stroke-width="1.8"/></svg>
<svg class="abs" style="left:1037px;top:600px" width="13" height="13" viewBox="0 0 13 13"><circle cx="6.5" cy="6.5" r="6" fill="#1ab394"/><path d="M3.6 6.6 L5.6 8.6 L9.4 4.6" fill="none" stroke="#fff" stroke-width="1.8"/></svg>
<div class="abs td" style="left:1053px;top:599px;color:#1ab394">是</div>
<svg class="abs" style="left:1150px;top:601px" width="15" height="12" viewBox="0 0 15 12"><path d="M9.6 0.7 L1.5 0.7 Q0.7 0.7 0.7 1.5 L0.7 10.2 Q0.7 11 1.5 11 L10.1 11 Q10.9 11 10.9 10.2 L10.9 7.2" fill="none" stroke="#666" stroke-width="1.2"/><path d="M5 9.4 L5.6 7 L11.9 0.7 L13.9 2.7 L7.6 9 Z" fill="#bbb" stroke="#666" stroke-width="1"/></svg>
<div class="abs td" style="left:1169px;top:600px">编辑</div>
<svg class="abs" style="left:1211px;top:601px" width="12" height="12" viewBox="0 0 12 12"><path d="M0 2.5 L11 2.5 M3.5 2.5 L3.5 0.5 L7.5 0.5 L7.5 2.5" fill="none" stroke="#666" stroke-width="1"/><path d="M1.5 2.5 L1.5 11.5 L9.5 11.5 L9.5 2.5" fill="none" stroke="#666" stroke-width="1"/><path d="M3.5 4 V10 M5.5 4 V10 M7.5 4 V10" stroke="#888" stroke-width="1"/></svg>
<div class="abs td" style="left:1227px;top:600px">删除</div>
<div class="abs" style="left:307px;top:628px;width:1px;height:42px;background:#f0e8e8"></div>
<div class="abs" style="left:374px;top:628px;width:1px;height:42px;background:#f0e8e8"></div>
<div class="abs" style="left:641px;top:628px;width:1px;height:42px;background:#f0e8e8"></div>
<div class="abs" style="left:758px;top:628px;width:1px;height:42px;background:#f0e8e8"></div>
<div class="abs" style="left:875px;top:628px;width:1px;height:42px;background:#f0e8e8"></div>
<div class="abs" style="left:992px;top:628px;width:1px;height:42px;background:#f0e8e8"></div>
<div class="abs" style="left:1109px;top:628px;width:1px;height:42px;background:#f0e8e8"></div>
<div class="abs" style="left:1296px;top:628px;width:1px;height:42px;background:#f0e8e8"></div>
<div class="abs" style="left:307px;top:670px;width:1596px;height:1px;background:#f0e8e8"></div>
<div class="abs td" style="left:316px;top:643px">6</div>
<div class="abs td" style="left:374px;width:267px;top:642px;text-align:center">合伙人</div>
<div class="abs td" style="left:641px;width:117px;top:642px;text-align:center">合伙人</div>
<svg class="abs" style="left:807px;top:638px" width="26" height="24" viewBox="0 0 26 24"><g fill="none" stroke="#a9b9cf" stroke-width="1.3"><path d="M4.7 18.2 L2.1 18.2 Q0.9 18.2 0.9 17 L0.9 2.4 Q0.9 1.2 2.1 1.2 L17.5 1.2 Q18.7 1.2 18.7 2.4 L18.7 4.6"/><path d="M3.3 10.2 L6.2 7.3 L8.4 9.4 L13.7 4.5"/><path d="M13 18.2 L8.6 18.2 L8.6 15.6 L14.8 9.6 Q16.6 8.4 18.6 9.4"/></g><circle cx="17.9" cy="15.8" r="5.9" fill="#1a73e8"/><path d="M14.6 15.9 L17 18.1 L21.4 13.8" fill="none" stroke="#fff" stroke-width="1.8"/></svg>
<svg class="abs" style="left:924px;top:638px" width="26" height="24" viewBox="0 0 26 24"><g fill="none" stroke="#a9b9cf" stroke-width="1.3"><path d="M4.7 18.2 L2.1 18.2 Q0.9 18.2 0.9 17 L0.9 2.4 Q0.9 1.2 2.1 1.2 L17.5 1.2 Q18.7 1.2 18.7 2.4 L18.7 4.6"/><path d="M3.3 10.2 L6.2 7.3 L8.4 9.4 L13.7 4.5"/><path d="M13 18.2 L8.6 18.2 L8.6 15.6 L14.8 9.6 Q16.6 8.4 18.6 9.4"/></g><circle cx="17.9" cy="15.8" r="5.9" fill="#1a73e8"/><path d="M14.6 15.9 L17 18.1 L21.4 13.8" fill="none" stroke="#fff" stroke-width="1.8"/></svg>
<svg class="abs" style="left:1037px;top:643px" width="13" height="13" viewBox="0 0 13 13"><circle cx="6.5" cy="6.5" r="6" fill="#1ab394"/><path d="M3.6 6.6 L5.6 8.6 L9.4 4.6" fill="none" stroke="#fff" stroke-width="1.8"/></svg>
<div class="abs td" style="left:1053px;top:642px;color:#1ab394">是</div>
<svg class="abs" style="left:1150px;top:644px" width="15" height="12" viewBox="0 0 15 12"><path d="M9.6 0.7 L1.5 0.7 Q0.7 0.7 0.7 1.5 L0.7 10.2 Q0.7 11 1.5 11 L10.1 11 Q10.9 11 10.9 10.2 L10.9 7.2" fill="none" stroke="#666" stroke-width="1.2"/><path d="M5 9.4 L5.6 7 L11.9 0.7 L13.9 2.7 L7.6 9 Z" fill="#bbb" stroke="#666" stroke-width="1"/></svg>
<div class="abs td" style="left:1169px;top:643px">编辑</div>
<svg class="abs" style="left:1211px;top:644px" width="12" height="12" viewBox="0 0 12 12"><path d="M0 2.5 L11 2.5 M3.5 2.5 L3.5 0.5 L7.5 0.5 L7.5 2.5" fill="none" stroke="#666" stroke-width="1"/><path d="M1.5 2.5 L1.5 11.5 L9.5 11.5 L9.5 2.5" fill="none" stroke="#666" stroke-width="1"/><path d="M3.5 4 V10 M5.5 4 V10 M7.5 4 V10" stroke="#888" stroke-width="1"/></svg>
<div class="abs td" style="left:1227px;top:643px">删除</div>
</body></html>
